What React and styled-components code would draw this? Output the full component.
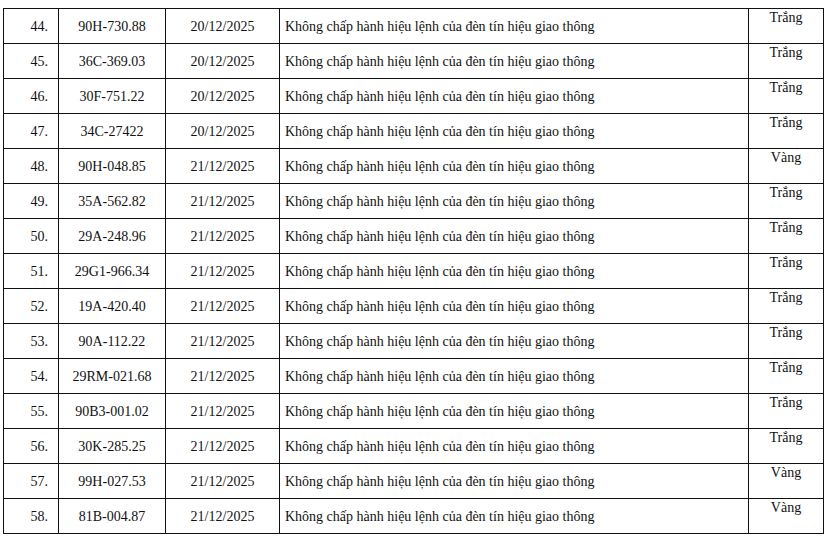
import React from 'react';
import styled, { createGlobalStyle } from 'styled-components';

const GlobalStyle = createGlobalStyle`
    body {
        margin: 0;
        background: #fff;
        font-family: "Liberation Serif", "Times New Roman", serif;
        color: #111;
    }
`;

const Page = styled.div`
    padding: 8px 0 0 3px;
`;

const Table = styled.table`
    border-collapse: collapse;
    table-layout: fixed;
    width: 821px;
    font-size: 14px;
`;

const Col = styled.col`
    width: ${p => p.$w}px;
`;

const Cell = styled.td`
    border: 1px solid #111;
    height: 35px;
    box-sizing: border-box;
    white-space: nowrap;
    padding: ${p => p.$top ? '1px' : '2px'} ${p => p.$align === 'right' ? '10px' : '5px'} 0 5px;
    text-align: ${p => p.$align || 'left'};
    vertical-align: ${p => p.$top ? 'top' : 'middle'};
`;

const rows = [
    ['44.', '90H-730.88', '20/12/2025', 'Trắng'],
    ['45.', '36C-369.03', '20/12/2025', 'Trắng'],
    ['46.', '30F-751.22', '20/12/2025', 'Trắng'],
    ['47.', '34C-27422', '20/12/2025', 'Trắng'],
    ['48.', '90H-048.85', '21/12/2025', 'Vàng'],
    ['49.', '35A-562.82', '21/12/2025', 'Trắng'],
    ['50.', '29A-248.96', '21/12/2025', 'Trắng'],
    ['51.', '29G1-966.34', '21/12/2025', 'Trắng'],
    ['52.', '19A-420.40', '21/12/2025', 'Trắng'],
    ['53.', '90A-112.22', '21/12/2025', 'Trắng'],
    ['54.', '29RM-021.68', '21/12/2025', 'Trắng'],
    ['55.', '90B3-001.02', '21/12/2025', 'Trắng'],
    ['56.', '30K-285.25', '21/12/2025', 'Trắng'],
    ['57.', '99H-027.53', '21/12/2025', 'Vàng'],
    ['58.', '81B-004.87', '21/12/2025', 'Vàng'],
];

const VIOLATION = 'Không chấp hành hiệu lệnh của đèn tín hiệu giao thông';

export default function App() {
    return (
        <Page>
            <GlobalStyle />
            <Table>
                <colgroup>
                    <Col $w={55} />
                    <Col $w={107} />
                    <Col $w={114} />
                    <Col $w={469} />
                    <Col $w={75} />
                </colgroup>
                <tbody>
                    {rows.map(r => (
                        <tr key={r[0]}>
                            <Cell $align="right">{r[0]}</Cell>
                            <Cell $align="center">{r[1]}</Cell>
                            <Cell $align="center">{r[2]}</Cell>
                            <Cell>{VIOLATION}</Cell>
                            <Cell $align="center" $top>{r[3]}</Cell>
                        </tr>
                    ))}
                </tbody>
            </Table>
        </Page>
    );
}
